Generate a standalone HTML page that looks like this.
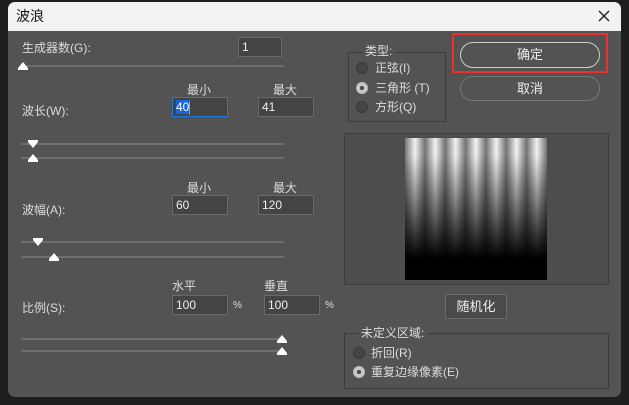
<!DOCTYPE html><html><head><meta charset="utf-8"><style>
*{box-sizing:border-box;margin:0;padding:0}
body{width:629px;height:405px;background:#1e1e1e;position:relative;overflow:hidden;font-family:"Liberation Sans","Noto Sans CJK SC",sans-serif;font-size:12px;color:#dcdcdc}
.dlg{position:absolute;left:8px;top:2px;width:613px;height:395px;background:#535353;border-radius:7px;overflow:hidden}
.title{position:absolute;left:0;top:0;width:613px;height:29px;background:#f2f2f2;color:#111;font-size:14px;line-height:29px;padding-left:8px}
.a{position:absolute;white-space:nowrap;line-height:14px}
.in{position:absolute;height:20px;background:#444;border:1px solid #6a6a6a;color:#eee;padding-left:3px;line-height:18px;font-size:12px}
.tr{position:absolute;left:21px;width:263px;height:2px;background:#6f6f6f;border-radius:1px}
.up,.dn{position:absolute;width:0;height:0;border-left:5px solid transparent;border-right:5px solid transparent}
.up{border-bottom:6px solid #fff}
.up:after{content:"";position:absolute;left:-5px;top:6px;width:10px;height:2px;background:#fff}
.dn{border-top:6px solid #fff}
.dn:before{content:"";position:absolute;left:-5px;top:-8px;width:10px;height:2px;background:#fff}
.grp{position:absolute;border:1px solid #3c3c3c}
.leg{position:absolute;background:#535353;padding:0 3px;line-height:14px}
.rad{position:absolute;width:12px;height:12px;border-radius:50%;background:#444;border:1px solid #3a3a3a}
.rad.on{background:#c8c8c8;border-color:#bbb}
.rad.on:after{content:"";position:absolute;left:3px;top:3px;width:4px;height:4px;border-radius:50%;background:#444}
.btn{position:absolute;border-radius:13px;text-align:center;color:#eee;font-size:13px}
.img{position:absolute;left:405px;top:138px;width:142px;height:142px;
background:repeating-linear-gradient(90deg,rgba(0,0,0,.05) 0px,rgba(0,0,0,.55) 10px,rgba(0,0,0,.05) 20.3px),linear-gradient(#fff 0%,#fff 12%,#000 85%,#000 100%);background-position:10px 0,0 0}
</style></head><body>
<div class="dlg">
<div class="title">波浪<svg style="position:absolute;left:590px;top:8px" width="12" height="12"><path d="M1 1L11 11M11 1L1 11" stroke="#222" stroke-width="1.4"/></svg></div>
</div>
<div class="a" style="left:22px;top:41px">生成器数(G):</div>
<div class="in" style="left:238px;top:37px;width:44px">1</div>
<div class="tr" style="top:65px"></div><div class="up" style="left:18px;top:62px"></div>

<div class="a" style="left:187px;top:83px">最小</div><div class="a" style="left:273px;top:83px">最大</div>
<div class="a" style="left:22px;top:104px">波长(W):</div>
<div class="in" style="left:172px;top:97px;width:56px;border-color:#1f7ae0"><span style="background:#1a66d6;color:#fff">40</span><span style="display:inline-block;width:1px;height:14px;background:#f80;vertical-align:middle"></span></div>
<div class="in" style="left:258px;top:97px;width:56px">41</div>
<div class="tr" style="top:143px"></div><div class="dn" style="left:28px;top:142px"></div>
<div class="tr" style="top:157px"></div><div class="up" style="left:28px;top:154px"></div>

<div class="a" style="left:187px;top:181px">最小</div><div class="a" style="left:273px;top:181px">最大</div>
<div class="a" style="left:22px;top:203px">波幅(A):</div>
<div class="in" style="left:172px;top:195px;width:56px">60</div>
<div class="in" style="left:258px;top:195px;width:56px">120</div>
<div class="tr" style="top:241px"></div><div class="dn" style="left:33px;top:240px"></div>
<div class="tr" style="top:256px"></div><div class="up" style="left:49px;top:253px"></div>

<div class="a" style="left:172px;top:279px">水平</div><div class="a" style="left:264px;top:279px">垂直</div>
<div class="a" style="left:22px;top:301px">比例(S):</div>
<div class="in" style="left:172px;top:295px;width:56px">100</div><div class="a" style="left:233px;top:299px;font-size:10px">%</div>
<div class="in" style="left:264px;top:295px;width:56px">100</div><div class="a" style="left:325px;top:299px;font-size:10px">%</div>
<div class="tr" style="top:338px"></div><div class="up" style="left:277px;top:335px"></div>
<div class="tr" style="top:350px"></div><div class="up" style="left:277px;top:347px"></div>

<div class="grp" style="left:348px;top:52px;width:98px;height:70px"></div>
<div class="leg" style="left:362px;top:44px">类型:</div>
<div class="rad" style="left:356px;top:62px"></div><div class="a" style="left:375px;top:61px">正弦(I)</div>
<div class="rad on" style="left:356px;top:82px"></div><div class="a" style="left:375px;top:81px">三角形 (T)</div>
<div class="rad" style="left:356px;top:101px"></div><div class="a" style="left:375px;top:100px">方形(Q)</div>

<div style="position:absolute;left:452px;top:33px;width:156px;height:40px;border:2px solid #e8322f"></div>
<div class="btn" style="left:460px;top:42px;width:140px;height:26px;border:1px solid #cfcfcf;line-height:24px">确定</div>
<div class="btn" style="left:460px;top:76px;width:140px;height:25px;border:1px solid #777;line-height:23px">取消</div>

<div style="position:absolute;left:344px;top:133px;width:265px;height:152px;background:#4d4d4d;border:1px solid #3e3e3e"></div>
<div class="img"></div>

<div style="position:absolute;left:445px;top:294px;width:62px;height:25px;background:#4a4a4a;border:1px solid #6a6a6a;text-align:center;line-height:23px;font-size:13px;color:#eee">随机化</div>

<div class="grp" style="left:344px;top:333px;width:265px;height:56px"></div>
<div class="leg" style="left:358px;top:326px">未定义区域:</div>
<div class="rad" style="left:353px;top:347px"></div><div class="a" style="left:371px;top:346px">折回(R)</div>
<div class="rad on" style="left:353px;top:366px"></div><div class="a" style="left:371px;top:365px">重复边缘像素(E)</div>
</body></html>
